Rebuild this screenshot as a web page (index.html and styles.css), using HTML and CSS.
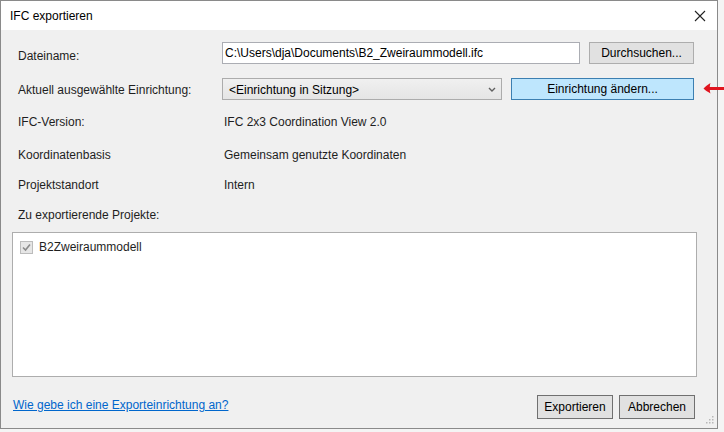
FILE: index.html
```
<!DOCTYPE html>
<html lang="de">
<head>
<meta charset="utf-8">
<title>IFC exportieren</title>
<link rel="stylesheet" href="styles.css">
</head>
<body>
<div class="desk">
  <div class="window">
    <div class="titlebar">
      <span class="title">IFC exportieren</span>
      <svg class="close" width="12" height="12" viewBox="0 0 12 12"><path d="M1 1L11 11M11 1L1 11" stroke="#222" stroke-width="1.1" fill="none"/></svg>
    </div>
    <div class="content">
      <div class="row row-first">
        <span class="label">Dateiname:</span>
        <div class="input">C:\Users\dja\Documents\B2_Zweiraummodell.ifc</div>
        <div class="btn btn-browse">Durchsuchen...</div>
      </div>
      <div class="row row-second">
        <span class="label">Aktuell ausgewählte Einrichtung:</span>
        <div class="combo"><span>&lt;Einrichtung in Sitzung&gt;</span>
          <svg class="chev" width="8" height="5" viewBox="0 0 8 5"><path d="M1 1L4 4L7 1" stroke="#606060" stroke-width="1.4" fill="none"/></svg>
        </div>
        <div class="btn btn-accent">Einrichtung ändern...</div>
      </div>
      <div class="info info-1"><span class="label">IFC-Version:</span><span class="value">IFC 2x3 Coordination View 2.0</span></div>
      <div class="info info-2"><span class="label">Koordinatenbasis</span><span class="value">Gemeinsam genutzte Koordinaten</span></div>
      <div class="info info-3"><span class="label">Projektstandort</span><span class="value">Intern</span></div>
      <div class="info info-4"><span class="label">Zu exportierende Projekte:</span></div>
      <div class="listbox">
        <div class="item">
          <span class="check"><svg width="11" height="11" viewBox="0 0 11 11"><path d="M2 5.5L4.5 8L9 2.5" stroke="#8a8a8a" stroke-width="1.6" fill="none"/></svg></span>
          <span>B2Zweiraummodell</span>
        </div>
      </div>
      <div class="footer">
        <a class="link" href="#">Wie gebe ich eine Exporteinrichtung an?</a>
        <div class="actions">
          <div class="btn btn-foot">Exportieren</div>
          <div class="btn btn-foot">Abbrechen</div>
        </div>
      </div>
    </div>
    <svg class="grip" width="10" height="10" viewBox="0 0 10 10">
      <g fill="#b8b8b8">
        <rect x="8" y="0" width="1.5" height="1.5"/>
        <rect x="5" y="3" width="1.5" height="1.5"/><rect x="8" y="3" width="1.5" height="1.5"/>
        <rect x="2" y="6" width="1.5" height="1.5"/><rect x="5" y="6" width="1.5" height="1.5"/><rect x="8" y="6" width="1.5" height="1.5"/>
      </g>
    </svg>
  </div>
  <svg class="arrow" width="22" height="14" viewBox="0 0 22 14"><path d="M22 7.5L7 7.5" stroke="#e0141e" stroke-width="3" fill="none"/><path d="M8.5 2C6 3.5 3.5 5.5 1.5 7.5C3.5 9.5 6 11 8.5 12.5C7.5 10.5 7.5 4 8.5 2Z" fill="#e0141e"/></svg>
</div>
</body>
</html>
```
FILE: styles.css
```
html, body {
  margin: 0;
  padding: 0;
}
body {
  background: #f4f4f4;
  font-family: "Liberation Sans", Arial, sans-serif;
  font-size: 12px;
  color: #1e1e1e;
}
.desk {
  position: relative;
  width: 724px;
  height: 432px;
  overflow: hidden;
}
.window {
  position: relative;
  width: 716px;
  height: 427px;
  border: 1px solid #8a8a8a;
  background: #f0f0f0;
  display: flex;
  flex-direction: column;
}
.titlebar {
  height: 29px;
  background: #ffffff;
  display: flex;
  align-items: center;
  justify-content: space-between;
  padding: 0 11px 0 9px;
}
.title {
  font-size: 12px;
  color: #000;
}
.close {
  display: block;
}
.content {
  padding: 0 20px 0 11px;
  display: flex;
  flex-direction: column;
}
.row {
  display: flex;
  align-items: center;
  height: 22px;
  padding-right: 2px;
}
.row-first { margin-top: 12px; }
.row-second { margin-top: 14px; }
.label {
  width: 204px;
  padding-left: 6px;
  flex: none;
}
.row-first .label {
  padding-top: 6px;
}
.row-second .label {
  padding-top: 2px;
}
.input {
  width: 354px;
  height: 20px;
  border: 1px solid #abadb3;
  background: #fff;
  padding-left: 2px;
  line-height: 20px;
  white-space: nowrap;
  overflow: hidden;
  color: #000;
}
.btn {
  box-sizing: border-box;
  display: flex;
  align-items: center;
  justify-content: center;
  border: 1px solid #adadad;
  background: #e1e1e1;
  color: #000;
}
.btn-browse {
  width: 105px;
  height: 22px;
  margin-left: 9px;
}
.combo {
  box-sizing: border-box;
  width: 280px;
  height: 22px;
  border: 1px solid #acacac;
  background: linear-gradient(#f0f0f0, #e5e5e5);
  display: flex;
  align-items: center;
  justify-content: space-between;
  padding: 1px 5px 0 6px;
  color: #000;
}
.chev { display: block; }
.btn-accent {
  width: 183px;
  height: 22px;
  margin-left: 9px;
  background: #bee6fd;
  border-color: #3c7fb1;
}
.info {
  display: flex;
  align-items: center;
  height: 22px;
}
.info-1 { margin-top: 11px; }
.info-2 { margin-top: 11px; }
.info-3 { margin-top: 8px; }
.info-4 { margin-top: 8px; }
.value {
  padding-left: 2px;
}
.listbox {
  margin-top: 6px;
  height: 143px;
  border: 1px solid #adadad;
  background: #fff;
}
.item {
  display: flex;
  align-items: center;
  gap: 6px;
  padding: 7px 0 0 7px;
}
.check {
  box-sizing: border-box;
  width: 13px;
  height: 13px;
  border: 1px solid #bcbcbc;
  background: #e6e6e6;
  display: flex;
  align-items: center;
  justify-content: center;
}
.check svg { display: block; }
.footer {
  margin-top: 18px;
  display: flex;
  align-items: center;
  justify-content: space-between;
  padding-right: 2px;
}
.link {
  color: #0066cc;
  text-decoration: underline;
  padding-left: 1px;
  margin-bottom: 4px;
}
.actions {
  display: flex;
  gap: 6px;
}
.btn-foot {
  width: 76px;
  height: 24px;
  border-color: #707070;
  background: #e1e1e1;
}
.grip {
  position: absolute;
  right: 3px;
  bottom: 2px;
}
.arrow {
  position: absolute;
  left: 702px;
  top: 81px;
}
```
